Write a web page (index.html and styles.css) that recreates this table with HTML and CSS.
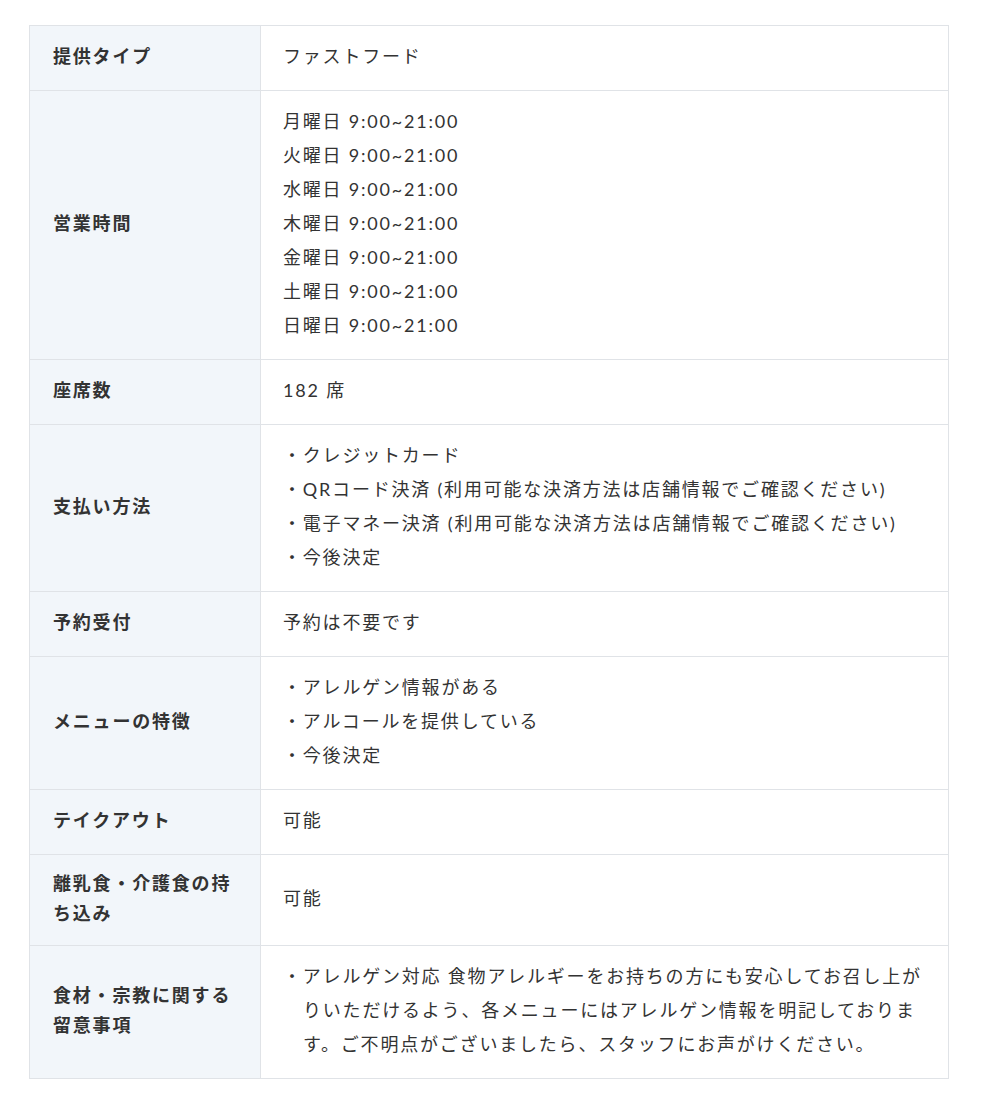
FILE: index.html
```html
<!DOCTYPE html>
<html lang="ja">
<head>
<meta charset="utf-8">
<link rel="stylesheet" href="styles.css">
</head>
<body>
<div class="wrap">
<table class="info">
<tr><th>提供タイプ</th><td>ファストフード</td></tr>
<tr><th>営業時間</th><td>月曜日 9:00~21:00<br>火曜日 9:00~21:00<br>水曜日 9:00~21:00<br>木曜日 9:00~21:00<br>金曜日 9:00~21:00<br>土曜日 9:00~21:00<br>日曜日 9:00~21:00</td></tr>
<tr><th>座席数</th><td>182 席</td></tr>
<tr><th>支払い方法</th><td><ul class="list"><li>・クレジットカード</li><li>・QRコード決済 (利用可能な決済方法は店舗情報でご確認ください)</li><li>・電子マネー決済 (利用可能な決済方法は店舗情報でご確認ください)</li><li>・今後決定</li></ul></td></tr>
<tr><th>予約受付</th><td>予約は不要です</td></tr>
<tr><th>メニューの特徴</th><td><ul class="list"><li>・アレルゲン情報がある</li><li>・アルコールを提供している</li><li>・今後決定</li></ul></td></tr>
<tr><th>テイクアウト</th><td>可能</td></tr>
<tr><th>離乳食・介護食の持ち込み</th><td>可能</td></tr>
<tr><th>食材・宗教に関する留意事項</th><td><ul class="list hang"><li>・アレルゲン対応 食物アレルギーをお持ちの方にも安心してお召し上がりいただけるよう、各メニューにはアレルゲン情報を明記しております。ご不明点がございましたら、スタッフにお声がけください。</li></ul></td></tr>
</table>
</div>
</body>
</html>
```

FILE: styles.css
```css
html, body {
  margin: 0;
  padding: 0;
  background: #ffffff;
}
.wrap {
  padding: 25px 40px 30px 29px;
}
.info {
  width: 920px;
  border-collapse: collapse;
  font-family: Lato, "Noto Sans CJK JP", "Noto Sans", sans-serif;
  font-size: 18px;
  color: #333333;
  letter-spacing: 1.8px;
}
.info th, .info td {
  border: 1px solid #e0e3e7;
  vertical-align: middle;
  text-align: left;
}
.info th {
  width: 185px;
  background: #f2f6fa;
  font-weight: 700;
  padding: 13px 22px 17px 23px;
  line-height: 30px;
}
.info td {
  padding: 13px 18px 17px 22px;
  line-height: 34px;
  font-weight: 400;
}
.list {
  list-style: none;
  margin: 0;
  padding: 0;
}
.hang li {
  padding-left: 20px;
  text-indent: -20px;
}
```
